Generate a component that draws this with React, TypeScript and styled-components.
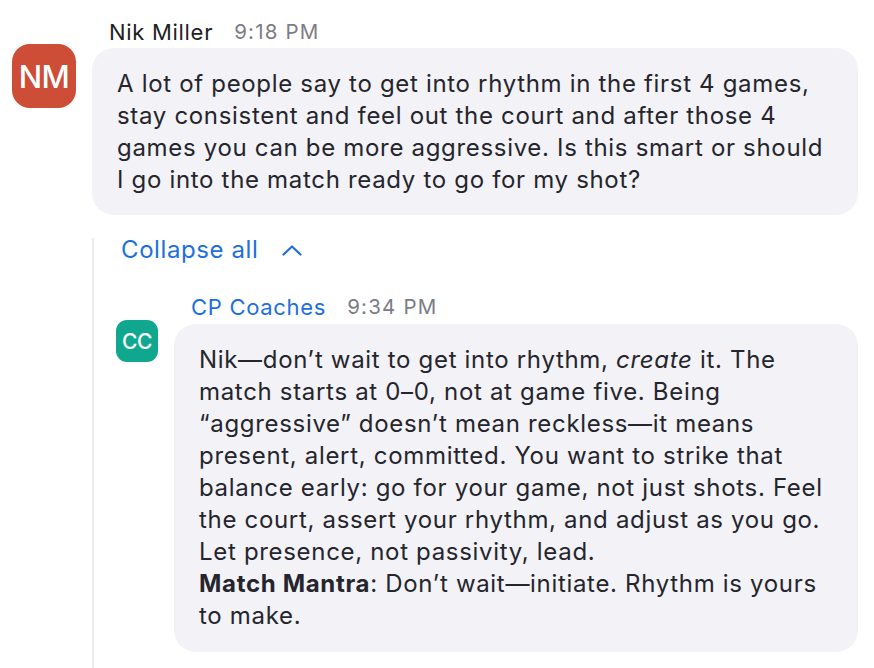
import React from "react";
import styled, { createGlobalStyle } from "styled-components";

const Global = createGlobalStyle`
  html, body { margin: 0; padding: 0; background: #ffffff; }
  body { font-family: Inter, "Noto Sans", "Liberation Sans", sans-serif; -webkit-font-smoothing: antialiased; }
`;

const Page = styled.div`
  width: 874px;
  height: 668px;
  overflow: hidden;
  padding-top: 18px;
  box-sizing: border-box;
  color: #25252d;
  display: flex;
  flex-direction: column;
`;

const Row = styled.div<{ $gap: number }>`
  display: flex;
  align-items: flex-start;
  gap: ${(p) => p.$gap}px;
`;

const Avatar = styled.div<{ $size: number; $bg: string; $top: number; $radius: number; $font: number }>`
  flex: none;
  width: ${(p) => p.$size}px;
  height: ${(p) => p.$size}px;
  margin-top: ${(p) => p.$top}px;
  border-radius: ${(p) => p.$radius}px;
  background: ${(p) => p.$bg};
  color: #ffffff;
  display: flex;
  align-items: center;
  justify-content: center;
  font-size: ${(p) => p.$font}px;
  font-weight: 500;
  letter-spacing: -0.5px;
`;

const Column = styled.div<{ $width: number }>`
  width: ${(p) => p.$width}px;
  display: flex;
  flex-direction: column;
`;

const Header = styled.div<{ $height: number }>`
  height: ${(p) => p.$height}px;
  padding-left: 17px;
  display: flex;
  align-items: flex-start;
  gap: 21px;
  line-height: 28px;
`;

const Name = styled.span<{ $color: string }>`
  font-size: 22px;
  letter-spacing: 0.7px;
  color: ${(p) => p.$color};
`;

const Time = styled.span`
  font-size: 20.5px;
  letter-spacing: 1.2px;
  color: #7c7c86;
`;

const Bubble = styled.div<{ $bottom: number }>`
  background: #f2f2f7;
  border-radius: 22px;
  padding: 20px 20px ${(p) => p.$bottom}px 25px;
  font-size: 24px;
  line-height: 32px;
  letter-spacing: 0.68px;
  color: #25252d;
  white-space: nowrap;
`;

const Thread = styled.div`
  flex: 1;
  margin-left: 92px;
  margin-top: 23px;
  border-left: 2px solid #ececf0;
`;

const Collapse = styled.button`
  all: unset;
  display: flex;
  align-items: center;
  gap: 24px;
  margin-left: 27px;
  height: 24px;
  font-family: Inter, "Noto Sans", sans-serif;
  font-size: 24px;
  line-height: 24px;
  letter-spacing: 0.6px;
  color: #1d6fe0;
  cursor: pointer;
`;

const Reply = styled.div`
  margin-top: 31px;
  margin-left: 22px;
`;

const Bold = styled.strong`
  font-weight: 700;
`;

const Chevron = () => (
  <svg width="20" height="11" viewBox="0 0 20 11" fill="none">
    <polyline points="1.5,9.5 10,1.5 18.5,9.5" stroke="#1d6fe0" strokeWidth="2.2" strokeLinecap="round" strokeLinejoin="round" />
  </svg>
);

export default function App() {
  return (
    <Page>
      <Global />
      <Row $gap={16} style={{ paddingLeft: 12 }}>
        <Avatar $size={64} $bg="#cd4d37" $top={26} $radius={18} $font={31}>NM</Avatar>
        <Column $width={766}>
          <Header $height={30}>
            <Name $color="#1f1f24">Nik Miller</Name>
            <Time>9:18 PM</Time>
          </Header>
          <Bubble $bottom={19}>
            A lot of people say to get into rhythm in the first 4 games,<br />
            stay consistent and feel out the court and after those 4<br />
            games you can be more aggressive. Is this smart or should<br />
            I go into the match ready to go for my shot?
          </Bubble>
        </Column>
      </Row>
      <Thread>
        <Collapse>
          Collapse all
          <Chevron />
        </Collapse>
        <Reply>
          <Row $gap={16}>
            <Avatar $size={42} $bg="#0fa88e" $top={27} $radius={11} $font={21}>CC</Avatar>
            <Column $width={684}>
              <Header $height={31}>
                <Name $color="#1d6fe0">CP Coaches</Name>
                <Time>9:34 PM</Time>
              </Header>
              <Bubble $bottom={20}>
                Nik—don’t wait to get into rhythm, <em>create</em> it. The<br />
                match starts at 0–0, not at game five. Being<br />
                “aggressive” doesn’t mean reckless—it means<br />
                present, alert, committed. You want to strike that<br />
                balance early: go for your game, not just shots. Feel<br />
                the court, assert your rhythm, and adjust as you go.<br />
                Let presence, not passivity, lead.<br />
                <Bold>Match Mantra</Bold>: Don’t wait—initiate. Rhythm is yours<br />
                to make.
              </Bubble>
            </Column>
          </Row>
        </Reply>
      </Thread>
    </Page>
  );
}
